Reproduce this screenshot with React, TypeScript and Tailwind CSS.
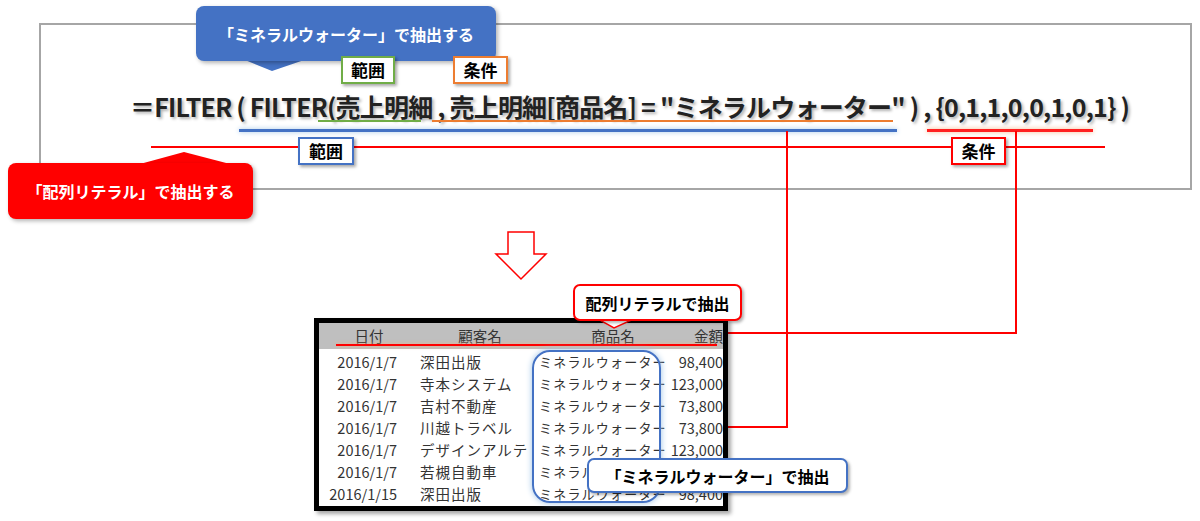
import React from "react";

const F = { fontFamily: '"Noto Sans CJK JP", "Noto Sans", sans-serif' };

function Label({ x, y, w, color, text }: { x: number; y: number; w: number; color: string; text: string }) {
  return (
    <div className="absolute bg-white border-2 flex items-center justify-center text-[17px] font-bold text-black whitespace-nowrap shadow-[2px_2px_3px_rgba(0,0,0,0.35)]"
      style={{ left: x, top: y, width: w, height: 28, borderColor: color }}>
      {text}
    </div>
  );
}

const rows = [
  ["2016/1/7", "深田出版", "98,400"],
  ["2016/1/7", "寺本システム", "123,000"],
  ["2016/1/7", "吉村不動産", "73,800"],
  ["2016/1/7", "川越トラベル", "73,800"],
  ["2016/1/7", "デザインアルテ", "123,000"],
  ["2016/1/7", "若槻自動車", "123,000"],
  ["2016/1/15", "深田出版", "98,400"],
];

export default function App() {
  return (
    <div className="relative w-[1200px] h-[521px] bg-white overflow-hidden" style={F}>
      <div className="absolute left-[39px] top-[23px] w-[1153px] h-[167px] border-2 border-[#a6a6a6]" />

      {/* formula */}
      <div className="absolute left-[130px] top-[88px] text-[25px] leading-[36px] font-bold text-[#222] whitespace-nowrap tracking-[-0.8px] [text-shadow:2px_2px_3px_rgba(0,0,0,0.3)]">
        ＝FILTER ( FILTER(売上明細 , 売上明細[商品名] = "ミネラルウォーター" ) , {"{0,1,1,0,0,1,0,1}"} )
      </div>

      {/* underlines */}
      <div className="absolute left-[318px] top-[120px] w-[103px] h-[2px] bg-[#70ad47]" />
      <div className="absolute left-[432px] top-[120px] w-[461px] h-[2px] bg-[#ed7d31]" />
      <div className="absolute left-[239px] top-[129px] w-[658px] h-[3px] bg-[#4472c4] shadow-[0_0_5px_#9dc3e6]" />
      <div className="absolute left-[927px] top-[129px] w-[166px] h-[3px] bg-[#ff2020] shadow-[0_0_5px_#f4b183]" />
      <div className="absolute left-[151px] top-[146px] w-[954px] h-[2px] bg-[#ff0000]" />

      {/* connector lines */}
      <div className="absolute left-[786px] top-[131px] w-[2px] h-[297px] bg-[#ff0000]" />
      <div className="absolute left-[668px] top-[426px] w-[120px] h-[2px] bg-[#ff0000]" />
      <div className="absolute left-[661px] top-[422px] w-0 h-0 border-y-[5px] border-y-transparent border-r-[9px] border-r-[#ff0000]" />
      <div className="absolute left-[1015px] top-[131px] w-[2px] h-[203px] bg-[#ff0000]" />
      <div className="absolute left-[726px] top-[332px] w-[291px] h-[2px] bg-[#ff0000]" />
      <div className="absolute left-[718px] top-[328px] w-0 h-0 border-y-[5px] border-y-transparent border-r-[9px] border-r-[#ff0000]" />

      {/* blue callout */}
      <svg className="absolute left-[240px] top-[58px]" width="70" height="14"><polygon points="0,0 70,0 32,13" fill="#4472c4" /></svg>
      <div className="absolute left-[196px] top-[6px] w-[300px] h-[55px] rounded-[8px] bg-[#4472c4] text-white text-[16px] font-bold whitespace-nowrap flex items-center justify-center shadow-[2px_2px_4px_rgba(0,0,0,0.3)]">
        「ミネラルウォーター」で抽出する
      </div>

      {/* red callout */}
      <svg className="absolute left-[140px] top-[152px]" width="90" height="13"><polygon points="0,12 44,0 90,12" fill="#ff0000" /></svg>
      <div className="absolute left-[8px] top-[163px] w-[245px] h-[56px] rounded-[8px] bg-[#ff0000] text-white text-[16px] font-bold whitespace-nowrap flex items-center justify-center shadow-[2px_2px_4px_rgba(0,0,0,0.3)]">
        「配列リテラル」で抽出する
      </div>

      <Label x={341} y={56} w={54} color="#70ad47" text="範囲" />
      <Label x={453} y={56} w={55} color="#ed7d31" text="条件" />
      <Label x={298} y={137} w={56} color="#4472c4" text="範囲" />
      <Label x={951} y={137} w={55} color="#ff0000" text="条件" />

      {/* down arrow */}
      <svg className="absolute left-[494px] top-[231px]" width="54" height="50">
        <polygon points="14,1 40,1 40,23 52,23 27,48 2,23 14,23" fill="white" stroke="#ff0000" strokeWidth="1.5" />
      </svg>

      {/* table */}
      <div className="absolute left-[314px] top-[318px] w-[414px] h-[193px] border-[5px] border-black bg-white shadow-[3px_3px_4px_rgba(0,0,0,0.35)] text-[14.5px] text-[#333] whitespace-nowrap">
        <div className="h-[26px] bg-[#bfbfbf] flex items-center">
          <div className="w-[100px] text-center">日付</div>
          <div className="w-[122px] text-center">顧客名</div>
          <div className="w-[132px] text-center pl-[12px]">商品名</div>
          <div className="w-[50px] text-right">金額</div>
        </div>
        <div className="pt-[2px]">
          {rows.map((r, i) => (
            <div key={i} className="h-[22px] flex items-center">
              <div className="w-[78px] text-right">{r[0]}</div>
              <div className="w-[142px] pl-[23px] tracking-[1px]">{r[1]}</div>
              <div className="w-[125px] pl-[0px] tracking-[1.2px] text-[13px]">ミネラルウォーター</div>
              <div className="w-[59px] text-right">{r[2]}</div>
            </div>
          ))}
        </div>
      </div>
      <div className="absolute left-[336px] top-[344px] w-[381px] h-[2px] bg-[#ff0000] shadow-[0_0_4px_#f4b183]" />
      <div className="absolute left-[532px] top-[350px] w-[129px] h-[153px] rounded-[18px] border-2 border-[#4472c4] shadow-[0_0_6px_#9dc3e6]" />

      {/* table callouts */}
      <svg className="absolute left-[596px] top-[318px]" width="40" height="12"><polygon points="0,0 40,0 18,10" fill="white" stroke="#ff0000" strokeWidth="1.5" /><rect x="1" y="0" width="38" height="2" fill="white" /></svg>
      <div className="absolute left-[573px] top-[284px] w-[169px] h-[37px] rounded-[7px] bg-white border-2 border-[#ff0000] text-[16px] font-bold whitespace-nowrap flex items-center justify-center shadow-[2px_2px_3px_rgba(0,0,0,0.3)]">
        配列リテラルで抽出
      </div>
      <div className="absolute left-[587px] top-[458px] w-[261px] h-[35px] rounded-[7px] bg-white border-2 border-[#4472c4] text-[16px] font-bold whitespace-nowrap flex items-center justify-center shadow-[2px_2px_3px_rgba(0,0,0,0.3)]">
        「ミネラルウォーター」で抽出
      </div>
    </div>
  );
}
